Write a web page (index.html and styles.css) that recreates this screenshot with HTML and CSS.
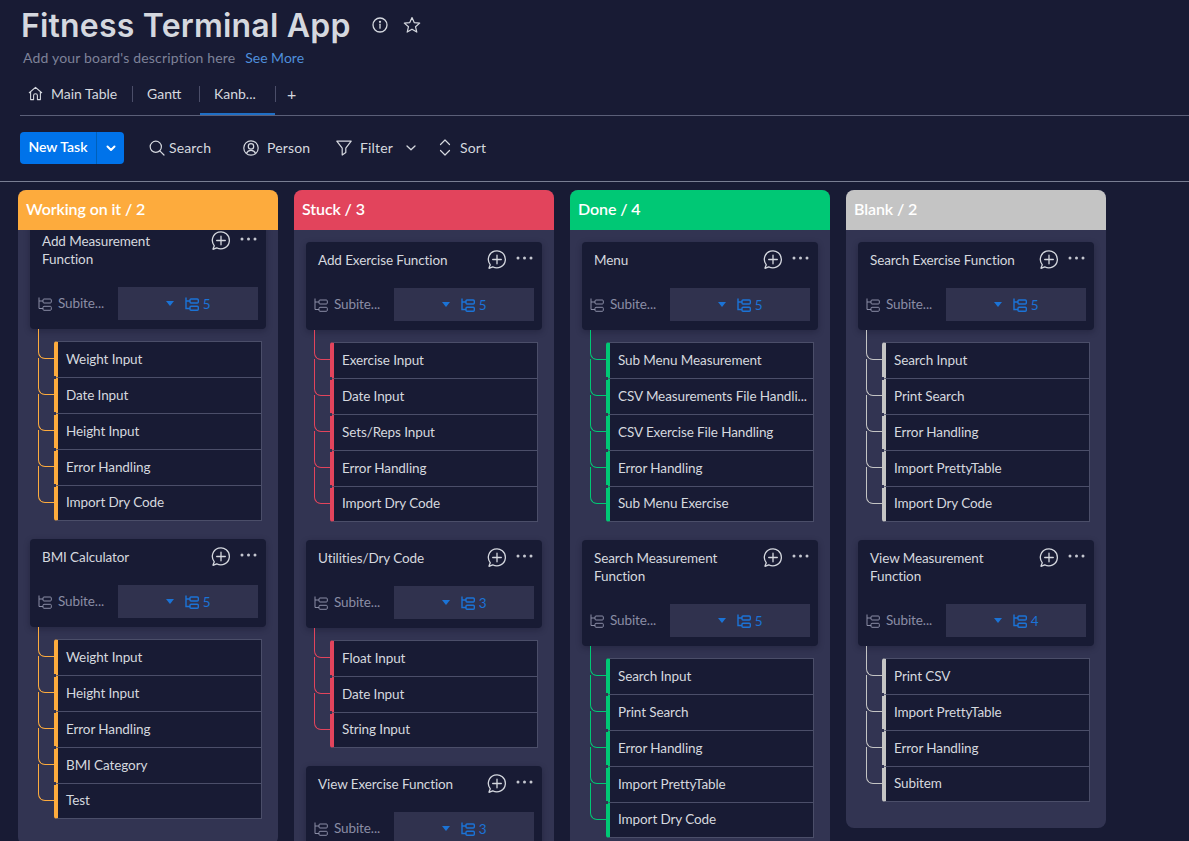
FILE: index.html
```html
<!DOCTYPE html>
<html lang="en">
<head>
  <meta charset="UTF-8">
  <meta name="viewport" content="width=device-width, initial-scale=1.0">
  <title>Fitness Terminal App</title>
  <link rel="stylesheet" href="styles.css">
</head>
<body>

  <svg class="sprite" width="0" height="0">
    <symbol id="i-comment" viewBox="0 0 20 20">
      <path d="M3.300 14.800A8.500 8.500 0 1 1 5.700 16.800L2.600 18.200Q1.800 18.500 2.100 17.700Z" fill="none" stroke="currentColor" stroke-width="1.300" stroke-linejoin="round"/>
      <path d="M10 5.200v8.600M5.700 9.500h8.600" fill="none" stroke="currentColor" stroke-width="1.300" stroke-linecap="round"/>
    </symbol>
    <symbol id="i-dots" viewBox="0 0 17 4">
      <circle cx="2" cy="2" r="1.500" fill="currentColor"/>
      <circle cx="8.500" cy="2" r="1.500" fill="currentColor"/>
      <circle cx="15" cy="2" r="1.500" fill="currentColor"/>
    </symbol>
    <symbol id="i-tree" viewBox="0 0 14 14">
      <path d="M1 .5v11h4M1 4h4" fill="none" stroke="currentColor"/>
      <rect x="5" y="2" width="8.300" height="4" rx="1" fill="none" stroke="currentColor"/>
      <rect x="5" y="9.300" width="8.300" height="4" rx="1" fill="none" stroke="currentColor"/>
    </symbol>
    <symbol id="i-caret" viewBox="0 0 8 5">
      <path d="M0 0h8L4 5Z" fill="currentColor"/>
    </symbol>
  </svg>

  <header class="board-head">
    <div class="title-row">
      <h1>Fitness Terminal App</h1>
      <svg class="title-icon" width="16" height="16" viewBox="0 0 16 16" fill="none" stroke="currentColor" stroke-width="1.300">
        <circle cx="8" cy="8" r="7"/>
        <path d="M8 7.200v4" stroke-linecap="round"/>
        <circle cx="8" cy="4.800" r=".5" fill="currentColor"/>
      </svg>
      <svg class="title-icon star" width="18" height="18" viewBox="0 0 18 18" fill="none" stroke="currentColor" stroke-width="1.200" stroke-linejoin="round">
        <path d="M9 1.500 11.200 6.600 16.700 7.100 12.500 10.700 13.800 16.100 9 13.200 4.200 16.100 5.500 10.700 1.300 7.100 6.800 6.600Z"/>
      </svg>
    </div>
    <p class="desc">Add your board's description here <a class="see-more">See More</a></p>

    <nav class="tabs">
      <div class="tab tab-main">
        <svg width="15" height="15" viewBox="0 0 15 15" fill="none" stroke="currentColor" stroke-width="1.100" stroke-linejoin="round">
          <path d="M1 7 7.500 1.400 14 7M2.600 5.800V13.600H5.600V9.600A1.900 1.900 0 0 1 9.400 9.600V13.600H12.400V5.800"/>
        </svg>
        Main Table
      </div>
      <span class="tab-sep"></span>
      <div class="tab tab-gantt">Gantt</div>
      <span class="tab-sep"></span>
      <div class="tab tab-kanban active">Kanb...</div>
      <span class="tab-sep"></span>
      <div class="tab tab-add">+</div>
    </nav>

    <div class="toolbar">
      <div class="new-task">
        <span class="new-task-label">New Task</span>
        <span class="new-task-arrow">
          <svg width="10" height="7" viewBox="0 0 10 7" fill="none" stroke="currentColor" stroke-width="2" stroke-linecap="round" stroke-linejoin="round"><path d="M1.500 1.500 5 5l3.500-3.500"/></svg>
        </span>
      </div>
      <div class="tool tool-search">
        <svg width="16" height="16" viewBox="0 0 16 16" fill="none" stroke="currentColor" stroke-width="1.200" stroke-linecap="round"><circle cx="6.800" cy="6.800" r="5.600"/><path d="M10.800 10.800 15 15"/></svg>
        Search
      </div>
      <div class="tool tool-person">
        <svg width="16" height="16" viewBox="0 0 16 16" fill="none" stroke="currentColor" stroke-width="1.200"><circle cx="8" cy="8" r="7.200"/><circle cx="8" cy="6.400" r="2.700"/><path d="M3.400 13.400C4.400 11.200 6 10.400 8 10.400s3.600.8 4.600 3"/></svg>
        Person
      </div>
      <div class="tool tool-filter">
        <svg width="16" height="16" viewBox="0 0 16 16" fill="none" stroke="currentColor" stroke-width="1.200" stroke-linejoin="round"><path d="M.8 1.200H15.200L9.800 8.200V12.600L6.200 15V8.200Z"/></svg>
        Filter
        <svg class="filter-chevron" width="10" height="6" viewBox="0 0 10 6" fill="none" stroke="currentColor" stroke-width="1.300" stroke-linecap="round" stroke-linejoin="round"><path d="M1 1 5 4.800 9 1"/></svg>
      </div>
      <div class="tool tool-sort">
        <svg width="12" height="17" viewBox="0 0 12 17" fill="none" stroke="currentColor" stroke-width="1.200" stroke-linecap="round" stroke-linejoin="round"><path d="M1.500 5.500 6 1l4.500 4.500M1.500 11.500 6 16l4.500-4.500"/></svg>
        Sort
      </div>
    </div>
  </header>

  <main class="board">

    <section class="column col-orange">
      <h2 class="col-head">Working on it / 2</h2>
      <div class="col-body scrolled">
        <article class="card">
          <div class="card-top">
            <div class="card-title">Add Measurement Function</div>
            <svg class="card-comment"><use href="#i-comment"/></svg>
            <svg class="card-dots"><use href="#i-dots"/></svg>
          </div>
          <div class="card-sub">
            <svg class="sub-icon"><use href="#i-tree"/></svg>
            <span class="sub-label">Subite...</span>
            <div class="sub-box"><svg class="box-caret"><use href="#i-caret"/></svg><svg class="box-tree"><use href="#i-tree"/></svg>5</div>
          </div>
        </article>
        <ul class="subitems">
          <li>Weight Input</li>
          <li>Date Input</li>
          <li>Height Input</li>
          <li>Error Handling</li>
          <li>Import Dry Code</li>
        </ul>
        <article class="card">
          <div class="card-top">
            <div class="card-title">BMI Calculator</div>
            <svg class="card-comment"><use href="#i-comment"/></svg>
            <svg class="card-dots"><use href="#i-dots"/></svg>
          </div>
          <div class="card-sub">
            <svg class="sub-icon"><use href="#i-tree"/></svg>
            <span class="sub-label">Subite...</span>
            <div class="sub-box"><svg class="box-caret"><use href="#i-caret"/></svg><svg class="box-tree"><use href="#i-tree"/></svg>5</div>
          </div>
        </article>
        <ul class="subitems">
          <li>Weight Input</li>
          <li>Height Input</li>
          <li>Error Handling</li>
          <li>BMI Category</li>
          <li>Test</li>
        </ul>
      </div>
    </section>

    <section class="column col-red">
      <h2 class="col-head">Stuck / 3</h2>
      <div class="col-body">
        <article class="card">
          <div class="card-top">
            <div class="card-title">Add Exercise Function</div>
            <svg class="card-comment"><use href="#i-comment"/></svg>
            <svg class="card-dots"><use href="#i-dots"/></svg>
          </div>
          <div class="card-sub">
            <svg class="sub-icon"><use href="#i-tree"/></svg>
            <span class="sub-label">Subite...</span>
            <div class="sub-box"><svg class="box-caret"><use href="#i-caret"/></svg><svg class="box-tree"><use href="#i-tree"/></svg>5</div>
          </div>
        </article>
        <ul class="subitems">
          <li>Exercise Input</li>
          <li>Date Input</li>
          <li>Sets/Reps Input</li>
          <li>Error Handling</li>
          <li>Import Dry Code</li>
        </ul>
        <article class="card">
          <div class="card-top">
            <div class="card-title">Utilities/Dry Code</div>
            <svg class="card-comment"><use href="#i-comment"/></svg>
            <svg class="card-dots"><use href="#i-dots"/></svg>
          </div>
          <div class="card-sub">
            <svg class="sub-icon"><use href="#i-tree"/></svg>
            <span class="sub-label">Subite...</span>
            <div class="sub-box"><svg class="box-caret"><use href="#i-caret"/></svg><svg class="box-tree"><use href="#i-tree"/></svg>3</div>
          </div>
        </article>
        <ul class="subitems">
          <li>Float Input</li>
          <li>Date Input</li>
          <li>String Input</li>
        </ul>
        <article class="card">
          <div class="card-top">
            <div class="card-title">View Exercise Function</div>
            <svg class="card-comment"><use href="#i-comment"/></svg>
            <svg class="card-dots"><use href="#i-dots"/></svg>
          </div>
          <div class="card-sub">
            <svg class="sub-icon"><use href="#i-tree"/></svg>
            <span class="sub-label">Subite...</span>
            <div class="sub-box"><svg class="box-caret"><use href="#i-caret"/></svg><svg class="box-tree"><use href="#i-tree"/></svg>3</div>
          </div>
        </article>
      </div>
    </section>

    <section class="column col-green">
      <h2 class="col-head">Done / 4</h2>
      <div class="col-body">
        <article class="card">
          <div class="card-top">
            <div class="card-title">Menu</div>
            <svg class="card-comment"><use href="#i-comment"/></svg>
            <svg class="card-dots"><use href="#i-dots"/></svg>
          </div>
          <div class="card-sub">
            <svg class="sub-icon"><use href="#i-tree"/></svg>
            <span class="sub-label">Subite...</span>
            <div class="sub-box"><svg class="box-caret"><use href="#i-caret"/></svg><svg class="box-tree"><use href="#i-tree"/></svg>5</div>
          </div>
        </article>
        <ul class="subitems">
          <li>Sub Menu Measurement</li>
          <li>CSV Measurements File Handli...</li>
          <li>CSV Exercise File Handling</li>
          <li>Error Handling</li>
          <li>Sub Menu Exercise</li>
        </ul>
        <article class="card">
          <div class="card-top">
            <div class="card-title">Search Measurement Function</div>
            <svg class="card-comment"><use href="#i-comment"/></svg>
            <svg class="card-dots"><use href="#i-dots"/></svg>
          </div>
          <div class="card-sub">
            <svg class="sub-icon"><use href="#i-tree"/></svg>
            <span class="sub-label">Subite...</span>
            <div class="sub-box"><svg class="box-caret"><use href="#i-caret"/></svg><svg class="box-tree"><use href="#i-tree"/></svg>5</div>
          </div>
        </article>
        <ul class="subitems">
          <li>Search Input</li>
          <li>Print Search</li>
          <li>Error Handling</li>
          <li>Import PrettyTable</li>
          <li>Import Dry Code</li>
        </ul>
      </div>
    </section>

    <section class="column col-gray">
      <h2 class="col-head">Blank / 2</h2>
      <div class="col-body">
        <article class="card">
          <div class="card-top">
            <div class="card-title">Search Exercise Function</div>
            <svg class="card-comment"><use href="#i-comment"/></svg>
            <svg class="card-dots"><use href="#i-dots"/></svg>
          </div>
          <div class="card-sub">
            <svg class="sub-icon"><use href="#i-tree"/></svg>
            <span class="sub-label">Subite...</span>
            <div class="sub-box"><svg class="box-caret"><use href="#i-caret"/></svg><svg class="box-tree"><use href="#i-tree"/></svg>5</div>
          </div>
        </article>
        <ul class="subitems">
          <li>Search Input</li>
          <li>Print Search</li>
          <li>Error Handling</li>
          <li>Import PrettyTable</li>
          <li>Import Dry Code</li>
        </ul>
        <article class="card">
          <div class="card-top">
            <div class="card-title">View Measurement Function</div>
            <svg class="card-comment"><use href="#i-comment"/></svg>
            <svg class="card-dots"><use href="#i-dots"/></svg>
          </div>
          <div class="card-sub">
            <svg class="sub-icon"><use href="#i-tree"/></svg>
            <span class="sub-label">Subite...</span>
            <div class="sub-box"><svg class="box-caret"><use href="#i-caret"/></svg><svg class="box-tree"><use href="#i-tree"/></svg>4</div>
          </div>
        </article>
        <ul class="subitems">
          <li>Print CSV</li>
          <li>Import PrettyTable</li>
          <li>Error Handling</li>
          <li>Subitem</li>
        </ul>
      </div>
    </section>

  </main>

</body>
</html>
```

FILE: styles.css
```css
body {
  margin: 0;
  height: 841px;
  overflow: hidden;
  background-color: #181b34;
  color: #d5d8df;
  font-family: Lato, "Noto Sans", sans-serif;
  font-size: 14px;
}

.sprite {
  position: absolute;
}

/* header */

.board-head {
  padding-left: 20px;
  border-bottom: 1px solid #797e93;
}

.title-row {
  display: flex;
  align-items: center;
  height: 49px;
}

h1 {
  margin: 1px 0 0 1px;
  font-family: Inter, sans-serif;
  font-size: 32px;
  font-weight: 600;
  letter-spacing: .2px;
  color: #d5d8df;
  width: 351px;
  white-space: nowrap;
}

.title-icon {
  color: #d5d8df;
  margin-right: 15px;
}

.desc {
  margin: 0 0 0 3px;
  height: 18px;
  line-height: 18px;
  font-size: 14px;
  letter-spacing: .18px;
  color: #7e8299;
}

.see-more {
  margin-left: 6px;
  letter-spacing: 0;
  color: #4f8fdc;
}

.tabs {
  display: flex;
  margin-top: 12px;
  height: 37px;
  border-bottom: 1px solid #5b5f78;
  box-sizing: border-box;
}

.tab {
  display: flex;
  align-items: center;
  gap: 8px;
  box-sizing: border-box;
  height: 36px;
  padding-bottom: 8px;
  font-size: 14px;
  white-space: nowrap;
}

.tab-main {
  width: 112px;
  padding-left: 8px;
}

.tab-gantt {
  width: 66px;
  padding-left: 14px;
}

.tab-kanban {
  width: 75px;
  padding-left: 14px;
}

.tab-add {
  padding-left: 11px;
  font-size: 16px;
}

.tab.active {
  padding-bottom: 6px;
  border-bottom: 2px solid #1f6fc5;
}

.tab-sep {
  width: 1px;
  height: 16px;
  margin-top: 7px;
  background-color: #4b4e69;
}

.toolbar {
  display: flex;
  align-items: center;
  height: 32px;
  padding: 16px 0 17px;
  font-size: 14px;
}

.new-task {
  display: flex;
  width: 104px;
  height: 32px;
  background-color: #0073ea;
  border-radius: 4px;
  color: #fff;
  font-weight: 600;
}

.new-task-label {
  display: flex;
  align-items: center;
  justify-content: center;
  width: 76px;
  padding-bottom: 3px;
  box-sizing: border-box;
  font-size: 14px;
}

.new-task-arrow {
  display: flex;
  align-items: center;
  justify-content: center;
  flex: 1;
  border-left: 1px solid #0060b9;
}

.tool {
  display: flex;
  align-items: center;
  gap: 4px;
  padding-bottom: 1px;
  letter-spacing: .15px;
  white-space: nowrap;
}

.tool-search {
  margin-left: 25px;
  width: 94px;
}

.tool-person {
  gap: 8px;
  width: 93px;
}

.tool-filter {
  gap: 8px;
  width: 103px;
}

.filter-chevron {
  margin-left: 5px;
}

.tool-sort {
  gap: 9px;
}

/* kanban board */

.board {
  display: flex;
  align-items: flex-start;
  gap: 16px;
  padding: 8px 0 0 18px;
}

.column {
  width: 260px;
  flex-shrink: 0;
  background-color: #323452;
  border-radius: 8px;
}

.col-orange { --col: #fdab3d; }
.col-red { --col: #e2445c; }
.col-green { --col: #00c875; }
.col-gray { --col: #c4c4c4; }

.col-head {
  margin: 0;
  height: 40px;
  line-height: 38px;
  padding-left: 8px;
  background-color: var(--col);
  border-radius: 8px 8px 0 0;
  color: #fff;
  font-size: 16px;
  font-weight: 600;
  letter-spacing: -.1px;
}

.col-body {
  padding: 12px 12px 26px;
  overflow: hidden;
  font-size: 13.5px;
  letter-spacing: -.1px;
}

.scrolled .card:first-child {
  margin-top: -19px;
}

.card {
  width: 236px;
  box-sizing: border-box;
  padding: 9px 8px;
  background-color: #181b34;
  border-radius: 4px;
  box-shadow: 0 2px 6px rgba(9, 11, 30, .3);
}

.card-top {
  display: flex;
  align-items: flex-start;
}

.card-title {
  flex: 1;
  padding: 0 8px 19px 4px;
  line-height: 18px;
}

.card-comment {
  width: 20px;
  height: 20px;
  margin-top: -1px;
  color: #d5d8df;
}

.card-dots {
  width: 17px;
  height: 4px;
  margin: 5px 1px 0 9px;
  color: #c5c7d0;
}

.card-sub {
  display: flex;
  align-items: center;
  height: 33px;
}

.sub-icon {
  width: 14px;
  height: 14px;
  stroke-width: 1;
  color: #8a8da5;
  flex-shrink: 0;
}

.sub-label {
  width: 66px;
  padding: 0 0 2px 6px;
  box-sizing: border-box;
  color: #8a8da5;
  flex-shrink: 0;
}

.sub-box {
  display: flex;
  align-items: center;
  justify-content: center;
  width: 140px;
  height: 33px;
  box-sizing: border-box;
  background-color: #30324e;
  color: #1b73d6;
}

.box-caret {
  width: 8px;
  height: 5px;
  margin-right: 10px;
}

.box-tree {
  width: 14px;
  height: 14px;
  margin: 0 4px 0 1px;
  stroke-width: 1.4;
}

/* subitems with their tree lines */

.subitems {
  list-style: none;
  margin: 12px 0 18px 24px;
  padding: 0;
  width: 208px;
}

.col-body > .subitems:last-child {
  margin-bottom: 0;
}

.subitems li {
  position: relative;
  box-sizing: border-box;
  height: 36px;
  line-height: 35px;
  padding-left: 8px;
  border: 1px solid #4b4e69;
  border-top: none;
  border-left: 4px solid var(--col);
  background-color: #181b34;
  white-space: nowrap;
}

.subitems li:first-child {
  height: 37px;
  line-height: 34px;
  border-top: 1px solid #4b4e69;
  border-top-left-radius: 3px;
}

.subitems li:last-child {
  height: 35px;
  line-height: 32px;
  border-bottom-left-radius: 3px;
}

.subitems li::before {
  content: "";
  position: absolute;
  left: -20px;
  top: -20px;
  box-sizing: border-box;
  width: 16px;
  height: 37px;
  border-left: 1px solid var(--col);
  border-bottom: 1px solid var(--col);
  border-bottom-left-radius: 7px;
}

.subitems li:first-child::before {
  top: -13px;
  height: 30px;
}

/* tiny notch where two rows meet on the coloured bar */
.subitems li + li::after {
  content: "";
  position: absolute;
  left: -4px;
  top: -2px;
  width: 2px;
  height: 3px;
  background-color: #323452;
}
```
